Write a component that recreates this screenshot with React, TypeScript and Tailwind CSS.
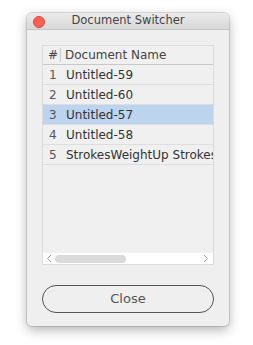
const docs = [
  { n: 1, name: 'Untitled-59' },
  { n: 2, name: 'Untitled-60' },
  { n: 3, name: 'Untitled-57', selected: true },
  { n: 4, name: 'Untitled-58' },
  { n: 5, name: 'StrokesWeightUp StrokesWeightDown' },
];

export default function App() {
  return (
    <div className="w-[253px] h-[345px] bg-white pt-[13px] pl-[27px] font-['DejaVu_Sans',sans-serif] text-[#333]">
      <div className="w-[202px] h-[313px] bg-[#efefef] rounded-[5px] shadow-[0_4px_12px_rgba(0,0,0,0.3),0_0_0_1px_rgba(0,0,0,0.12)] flex flex-col overflow-hidden">
        {/* title bar */}
        <div className="relative h-[17px] bg-gradient-to-b from-[#ebebeb] to-[#d8d8d8] border-b border-[#c4c4c4] flex items-center justify-center text-[11.5px] text-[#444]">
          <span className="absolute left-[6px] top-[3px] w-[12px] h-[12px] rounded-full bg-[#fc5f57] border border-[#e0443e]" />
          Document Switcher
        </div>

        {/* table */}
        <div className="mx-[15px] mt-[15px] h-[220px] border border-[#dcdcdc] bg-[#f0f0f0] flex flex-col overflow-hidden">
          <div className="h-[19px] flex items-center border-b border-[#c9c9c9] text-[12px] text-[#444] shrink-0">
            <span className="w-[17px] pl-[5px] shrink-0">#</span>
            <span className="h-[14px] border-l border-[#c9c9c9]" />
            <span className="pl-[4px]">Document Name</span>
          </div>
          {docs.map((d) => (
            <div
              key={d.n}
              className={`h-[20px] flex items-center border-b border-[#dedede] text-[12px] whitespace-nowrap shrink-0 ${d.selected ? 'bg-[#bdd4ef]' : ''}`}
            >
              <span className="w-[23px] pl-[6px] text-[#555] shrink-0">{d.n}</span>
              <span>{d.name}</span>
            </div>
          ))}
          <div className="flex-1" />
          <div className="h-[11px] bg-white flex items-center shrink-0">
            <svg className="ml-[3px] mr-[3px]" width="6" height="9" viewBox="0 0 6 9">
              <path d="M5 1 L1.5 4.5 L5 8" fill="none" stroke="#999" strokeWidth="1" />
            </svg>
            <span className="w-[71px] h-[8px] rounded-full bg-[#dadada]" />
            <span className="flex-1" />
            <svg className="mr-[4px]" width="6" height="9" viewBox="0 0 6 9">
              <path d="M1 1 L4.5 4.5 L1 8" fill="none" stroke="#999" strokeWidth="1" />
            </svg>
          </div>
        </div>

        {/* close */}
        <div className="mx-[15px] mt-[20px] h-[28px] rounded-full border border-[#555] flex items-center justify-center text-[13px] text-[#555]">
          Close
        </div>
      </div>
    </div>
  );
}
